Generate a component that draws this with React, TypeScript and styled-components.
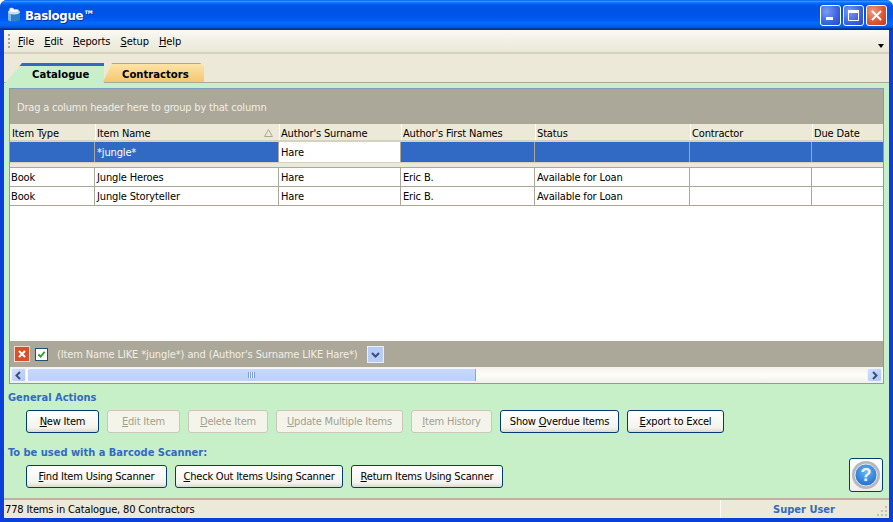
import styled, { createGlobalStyle } from 'styled-components';

const GlobalStyle = createGlobalStyle`
  html, body { margin: 0; padding: 0; background: #fff; }
  #root { width: 893px; height: 522px; }
`;

const uiFont = `"DejaVu Sans Condensed", "Liberation Sans", sans-serif`;

const Window = styled.div`
  width: 893px;
  height: 522px;
  box-sizing: border-box;
  display: flex;
  flex-direction: column;
  padding: 0 4px 4px;
  background: #0a3fd8;
  border-radius: 7px 7px 0 0;
  overflow: hidden;
  font: 11px ${uiFont};
  letter-spacing: -0.15px;
  color: #000;
`;

const TitleBar = styled.div`
  flex: 0 0 30px;
  margin: 0 -4px;
  padding: 0 6px 0 7px;
  display: flex;
  align-items: center;
  gap: 2px;
  background: linear-gradient(180deg, #0058ee 0, #3593ff 4%, #288eff 6%, #127dff 8%, #036ffc 10%, #0262ee 14%, #0057e5 20%, #0054e3 24%, #0055eb 56%, #005bf5 66%, #026afe 76%, #0062ef 86%, #0052d6 92%, #0040ab 94%, #003092 100%);
`;

const TitleText = styled.span`
  flex: 1;
  margin-left: 2px;
  color: #fff;
  font-size: 13px;
  font-weight: bold;
  letter-spacing: -0.3px;
  text-shadow: 1px 1px 0 #0f2fa0;
`;

const WindowButton = styled.div<{ $close?: boolean }>`
  width: 21px;
  height: 21px;
  box-sizing: border-box;
  border: 1px solid #fff;
  border-radius: 3px;
  display: flex;
  align-items: center;
  justify-content: center;
  background: ${({ $close }) =>
    $close
      ? 'radial-gradient(circle at 30% 30%, #f09a80, #dc5a38 55%, #c03a18)'
      : 'radial-gradient(circle at 30% 30%, #7a9cf0, #3d68e0 55%, #2347c8)'};
`;

const MenuBar = styled.div`
  flex: 0 0 22px;
  position: relative;
  display: flex;
  align-items: center;
  padding-left: 4px;
  letter-spacing: -0.08px;
  border-bottom: 2px solid #d6d2c2;
  background: linear-gradient(180deg, #faf9f4, #f0eee2 60%, #ebe8d8);
`;

const Gripper = styled.div`
  width: 2px;
  height: 14px;
  margin-right: 8px;
  background: repeating-linear-gradient(180deg, #a8a595 0 2px, transparent 2px 4px);
`;

const MenuItem = styled.span`
  margin-right: 10px;
`;

const Accel = styled.span`
  text-decoration: underline;
`;

const MenuChevron = styled.div`
  position: absolute;
  right: 5px;
  top: 14px;
  width: 0;
  height: 0;
  border: 3px solid transparent;
  border-top: 4px solid #000;
  border-bottom: 0;
`;

const TabStrip = styled.div`
  flex: 0 0 29px;
  box-sizing: border-box;
  display: flex;
  align-items: flex-end;
  padding-left: 1px;
  border-bottom: 1px solid #aca899;
  background: #ece9d8;
`;

const Tab = styled.div<{ $active?: boolean }>`
  box-sizing: border-box;
  height: ${({ $active }) => ($active ? '20px' : '19px')};
  margin-bottom: ${({ $active }) => ($active ? '-1px' : '0')};
  margin-right: ${({ $active }) => ($active ? '-1px' : '0')};
  width: ${({ $active }) => ($active ? '99px' : '101px')};
  padding-top: ${({ $active }) => ($active ? '2px' : '4px')};
  padding-left: ${({ $active }) => ($active ? '27px' : '19px')};
  font-size: 11.2px;
  font-weight: bold;
  letter-spacing: 0;
  clip-path: ${({ $active }) =>
    $active
      ? 'polygon(0 100%, 17px 0, 100% 0, 100% 100%)'
      : 'polygon(0 100%, 9px 0, 97px 0, 100% 3px, 100% 100%)'};
  border-top: ${({ $active }) => ($active ? '3px solid #316ac5' : '1px solid #aca899')};
  background: ${({ $active }) =>
    $active ? '#c8f0c8' : 'linear-gradient(180deg, #fde3a6, #f4c870)'};
`;

const Panel = styled.div`
  flex: 1;
  min-height: 0;
  display: flex;
  flex-direction: column;
  background: #c8f0c8;
  padding: 5px 5px 0;
`;

const Grid = styled.div`
  flex: 0 0 296px;
  box-sizing: border-box;
  display: flex;
  flex-direction: column;
  background: #fff;
  border: 1px solid #7f9db9;
`;

const GroupPanel = styled.div`
  flex: 0 0 35px;
  box-sizing: border-box;
  display: flex;
  align-items: center;
  padding: 2px 0 0 7px;
  letter-spacing: -0.2px;
  color: #f0eee4;
  background: #aca899;
`;

const Row = styled.div<{ $kind?: 'header' | 'filter' | 'data' }>`
  display: grid;
  grid-template-columns: 85px 184px 122px 134px 155px 122px 1fr;
  box-sizing: border-box;
  height: ${({ $kind }) => ($kind === 'header' ? '18px' : $kind === 'filter' ? '20px' : '19px')};
  color: ${({ $kind }) => ($kind === 'filter' ? '#fff' : '#000')};
  background: ${({ $kind }) =>
    $kind === 'header' ? '#ece9d8' : $kind === 'filter' ? '#316ac5' : '#fff'};
  border-bottom: ${({ $kind }) =>
    $kind === 'header' ? '2px solid #d6d2c2' : $kind === 'filter' ? 'none' : '1px solid #aca899'};
`;

const HeaderCell = styled.div`
  position: relative;
  display: flex;
  align-items: center;
  padding: 2px 0 0 2px;
  box-shadow: inset 1px 0 0 #fff;
  &:first-child { box-shadow: none; }
`;

const SortArrow = styled.svg`
  position: absolute;
  right: 6px;
  top: 5px;
`;

const Cell = styled.div<{ $white?: boolean }>`
  display: flex;
  align-items: center;
  padding-left: 2px;
  box-sizing: border-box;
  border-right: 1px solid #aca899;
  background: ${({ $white }) => ($white ? '#fff' : 'transparent')};
  color: ${({ $white }) => ($white ? '#000' : 'inherit')};
  &:first-child { padding-left: 1px; }
  &:last-child { border-right: none; }
`;

const RowGap = styled.div`
  flex: 0 0 6px;
  box-sizing: border-box;
  background: #ece9d8;
  border-top: 1px solid #d6d2c2;
  border-bottom: 1px solid #aca899;
`;

const EmptyArea = styled.div`
  flex: 1;
`;

const FilterBar = styled.div`
  flex: 0 0 26px;
  display: flex;
  align-items: center;
  padding-left: 4px;
  letter-spacing: -0.12px;
  color: #f0eee4;
  background: #aca899;
`;

const FilterBox = styled.div<{ $kind: 'clear' | 'check' }>`
  box-sizing: border-box;
  width: ${({ $kind }) => ($kind === 'clear' ? '16px' : '13px')};
  height: ${({ $kind }) => ($kind === 'clear' ? '16px' : '13px')};
  margin-right: 5px;
  display: flex;
  align-items: center;
  justify-content: center;
  border: 1px solid ${({ $kind }) => ($kind === 'clear' ? '#f4d8cc' : '#1c5180')};
  background: ${({ $kind }) => ($kind === 'clear' ? '#d8502c' : '#fff')};
`;

const FilterText = styled.span`
  margin-left: 4px;
  margin-right: 9px;
`;

const FilterDrop = styled.div`
  width: 17px;
  height: 17px;
  box-sizing: border-box;
  display: flex;
  align-items: center;
  justify-content: center;
  border: 1px solid #e8eefc;
  background: #b8ccf6;
`;

const ScrollBar = styled.div`
  flex: 0 0 16px;
  display: flex;
  background: linear-gradient(180deg, #f3f1ea, #fefefb 50%, #f1efe6);
`;

const ScrollButton = styled.div`
  flex: 0 0 15px;
  box-sizing: border-box;
  margin: 1px;
  display: flex;
  align-items: center;
  justify-content: center;
  border: 1px solid #eef2fd;
  border-radius: 2px;
  background: linear-gradient(135deg, #d4e0fb, #b0c6f4);
`;

const ScrollThumb = styled.div`
  flex: 0 0 449px;
  box-sizing: border-box;
  margin: 1px 0;
  display: flex;
  align-items: center;
  justify-content: center;
  border: 1px solid #f4f7fe;
  border-right-color: #8aa4e0;
  border-radius: 2px;
  background: linear-gradient(180deg, #c6d8fc, #bcd0fa);
`;

const ThumbGrip = styled.div`
  width: 7px;
  height: 6px;
  background: repeating-linear-gradient(90deg, #7f9ad8 0 1px, #eef3ff 1px 2px);
`;

const ScrollTrack = styled.div`
  flex: 1;
`;

const Section = styled.div<{ $top: number }>`
  margin-top: ${({ $top }) => $top}px;
  margin-left: -1px;
  color: #316ac5;
  font-weight: bold;
  letter-spacing: 0;
  line-height: 13px;
`;

const ActionRow = styled.div`
  display: flex;
  gap: 8px;
  margin: 6px 0 0 17px;
  position: relative;
`;

const ActionButton = styled.div<{ $width: number; $disabled?: boolean }>`
  width: ${({ $width }) => $width}px;
  height: 23px;
  box-sizing: border-box;
  display: flex;
  align-items: center;
  justify-content: center;
  border-radius: 3px;
  letter-spacing: -0.2px;
  border: 1px solid ${({ $disabled }) => ($disabled ? '#c9c7ba' : '#003c74')};
  color: ${({ $disabled }) => ($disabled ? '#a1a192' : '#000')};
  background: ${({ $disabled }) =>
    $disabled ? '#f5f4ea' : 'linear-gradient(180deg, #fff, #f4f3ee 80%, #dcd8ca)'};
`;

const HelpButton = styled.div`
  position: absolute;
  right: 1px;
  top: -7px;
  width: 34px;
  height: 34px;
  box-sizing: border-box;
  display: flex;
  align-items: center;
  justify-content: center;
  border: 1px solid #003c74;
  border-radius: 3px;
  background: linear-gradient(180deg, #fff, #f0efe8);
`;

const StatusBar = styled.div`
  flex: 0 0 20px;
  margin-top: auto;
  box-sizing: border-box;
  display: flex;
  align-items: center;
  padding-left: 1px;
  border-top: 2px solid #b8b5a6;
  background: #ece9d8;
`;

const StatusText = styled.span`
  flex: 1;
`;

const StatusUser = styled.div`
  flex: 0 0 169px;
  box-sizing: border-box;
  height: 18px;
  display: flex;
  align-items: center;
  justify-content: center;
  padding-right: 2px;
  color: #316ac5;
  font-weight: bold;
  letter-spacing: 0;
  border-left: 1px solid #fbfaf4;
  position: relative;
`;

const SizeGrip = styled.svg`
  position: absolute;
  right: 1px;
  bottom: 1px;
`;

const Content = styled.div`
  flex: 1;
  min-height: 0;
  display: flex;
  flex-direction: column;
`;

const Body = styled.div`
  padding-bottom: 10px;
`;

const columns = ['Item Type', 'Item Name', "Author's Surname", "Author's First Names", 'Status', 'Contractor', 'Due Date'];

const rows = [
  ['Book', 'Jungle Heroes', 'Hare', 'Eric B.', 'Available for Loan', '', ''],
  ['Book', 'Jungle Storyteller', 'Hare', 'Eric B.', 'Available for Loan', '', ''],
];

const Label = ({ text, at = 0 }: { text: string; at?: number }) => (
  <span>
    {text.slice(0, at)}
    <Accel>{text[at]}</Accel>
    {text.slice(at + 1)}
  </span>
);

const generalActions = [
  { text: 'New Item', width: 73 },
  { text: 'Edit Item', width: 73, disabled: true },
  { text: 'Delete Item', width: 80, disabled: true },
  { text: 'Update Multiple Items', width: 127, disabled: true },
  { text: 'Item History', width: 81, disabled: true },
  { text: 'Show Overdue Items', width: 119, at: 5 },
  { text: 'Export to Excel', width: 97 },
];

const scannerActions = [
  { text: 'Find Item Using Scanner', width: 141 },
  { text: 'Check Out Items Using Scanner', width: 168 },
  { text: 'Return Items Using Scanner', width: 152 },
];

const Chevron = ({ dir }: { dir: 'left' | 'right' | 'down' }) => (
  <svg width="9" height="9" viewBox="0 0 9 9">
    <path
      d={dir === 'left' ? 'M6 1 L2.5 4.5 L6 8' : dir === 'right' ? 'M3 1 L6.5 4.5 L3 8' : 'M1 3 L4.5 6.5 L8 3'}
      fill="none"
      stroke="#3a4f80"
      strokeWidth="2"
    />
  </svg>
);

export default function App() {
  return (
    <Window>
      <GlobalStyle />
      <TitleBar>
        <svg width="14" height="16" viewBox="0 0 14 16">
          <path d="M1 5 V13 Q7 16.5 13 13 V5 Z" fill="#2f7fc8" />
          <path d="M1 5 V13 Q2.5 14 4 14.5 V5 Z" fill="#7db8e8" />
          <ellipse cx="7" cy="5" rx="6" ry="2.5" fill="#cfe2f4" />
          <path d="M2 4.5 L3 1 H6 L7 2.5 H11 L12 4.5 Q7 7 2 4.5 Z" fill="#fff" stroke="#9ab8d8" strokeWidth="0.5" />
        </svg>
        <TitleText>Baslogue™</TitleText>
        <WindowButton>
          <svg width="13" height="13" viewBox="0 0 13 13">
            <rect x="2" y="8" width="7" height="3" fill="#fff" />
          </svg>
        </WindowButton>
        <WindowButton>
          <svg width="13" height="13" viewBox="0 0 13 13">
            <path d="M1.5 3.5 H11.5 V11.5 H1.5 Z" fill="none" stroke="#fff" />
            <rect x="1" y="1" width="11" height="2.5" fill="#fff" />
          </svg>
        </WindowButton>
        <WindowButton $close>
          <svg width="13" height="13" viewBox="0 0 13 13">
            <path d="M2 2 L11 11 M11 2 L2 11" stroke="#fff" strokeWidth="2" />
          </svg>
        </WindowButton>
      </TitleBar>

      <MenuBar>
        <Gripper />
        {['File', 'Edit', 'Reports', 'Setup', 'Help'].map((m) => (
          <MenuItem key={m}>
            <Label text={m} />
          </MenuItem>
        ))}
        <MenuChevron />
      </MenuBar>

      <TabStrip>
        <Tab $active>Catalogue</Tab>
        <Tab>Contractors</Tab>
      </TabStrip>

      <Content>
        <Panel>
          <Grid>
            <GroupPanel>Drag a column header here to group by that column</GroupPanel>
            <Row $kind="header">
              {columns.map((c) => (
                <HeaderCell key={c}>
                  {c}
                  {c === 'Item Name' && (
                    <SortArrow width="9" height="8" viewBox="0 0 9 8">
                      <path d="M4.5 0.5 L8.5 7.5 H0.5 Z" fill="none" stroke="#aca899" />
                    </SortArrow>
                  )}
                </HeaderCell>
              ))}
            </Row>
            <Row $kind="filter">
              <Cell />
              <Cell>*jungle*</Cell>
              <Cell $white>Hare</Cell>
              <Cell />
              <Cell />
              <Cell />
              <Cell />
            </Row>
            <RowGap />
            {rows.map((r) => (
              <Row key={r[1]} $kind="data">
                {r.map((v, i) => (
                  <Cell key={i}>{v}</Cell>
                ))}
              </Row>
            ))}
            <EmptyArea />
            <FilterBar>
              <FilterBox $kind="clear">
                <svg width="10" height="10" viewBox="0 0 10 10">
                  <path d="M2 2 L8 8 M8 2 L2 8" stroke="#fff" strokeWidth="2" />
                </svg>
              </FilterBox>
              <FilterBox $kind="check">
                <svg width="9" height="9" viewBox="0 0 10 10">
                  <path d="M1.5 5 L4 7.5 L8.5 2" fill="none" stroke="#21a121" strokeWidth="2" />
                </svg>
              </FilterBox>
              <FilterText>(Item Name LIKE *jungle*) and (Author's Surname LIKE Hare*)</FilterText>
              <FilterDrop>
                <Chevron dir="down" />
              </FilterDrop>
            </FilterBar>
            <ScrollBar>
              <ScrollButton>
                <Chevron dir="left" />
              </ScrollButton>
              <ScrollThumb>
                <ThumbGrip />
              </ScrollThumb>
              <ScrollTrack />
              <ScrollButton>
                <Chevron dir="right" />
              </ScrollButton>
            </ScrollBar>
          </Grid>

          <Body>
            <Section $top={7}>General Actions</Section>
            <ActionRow>
              {generalActions.map((a) => (
                <ActionButton key={a.text} $width={a.width} $disabled={a.disabled}>
                  <Label text={a.text} at={a.at} />
                </ActionButton>
              ))}
            </ActionRow>
            <Section $top={13}>To be used with a Barcode Scanner:</Section>
            <ActionRow>
              {scannerActions.map((a) => (
                <ActionButton key={a.text} $width={a.width}>
                  <Label text={a.text} />
                </ActionButton>
              ))}
              <HelpButton>
                <svg width="30" height="30" viewBox="0 0 30 30">
                  <defs>
                    <radialGradient id="helpFill" cx="50%" cy="35%" r="65%">
                      <stop offset="0" stopColor="#6ab4f4" />
                      <stop offset="1" stopColor="#1f6fd0" />
                    </radialGradient>
                  </defs>
                  <circle cx="15" cy="15" r="14" fill="#b4b8c0" />
                  <circle cx="15" cy="15" r="11" fill="url(#helpFill)" stroke="#e4e8ee" />
                  <text x="15" y="21" textAnchor="middle" fontSize="18" fontWeight="bold" fill="#eef2fa" fontFamily="Liberation Sans, sans-serif">?</text>
                </svg>
              </HelpButton>
            </ActionRow>
          </Body>
        </Panel>
        <StatusBar>
          <StatusText>778 Items in Catalogue, 80 Contractors</StatusText>
          <StatusUser>
            Super User
            <SizeGrip width="12" height="12" viewBox="0 0 12 12">
              <path d="M9 1h2v2H9zM5 5h2v2H5zM9 5h2v2H9zM1 9h2v2H1zM5 9h2v2H5zM9 9h2v2H9z" fill="#c4c1b2" />
            </SizeGrip>
          </StatusUser>
        </StatusBar>
      </Content>
    </Window>
  );
}
